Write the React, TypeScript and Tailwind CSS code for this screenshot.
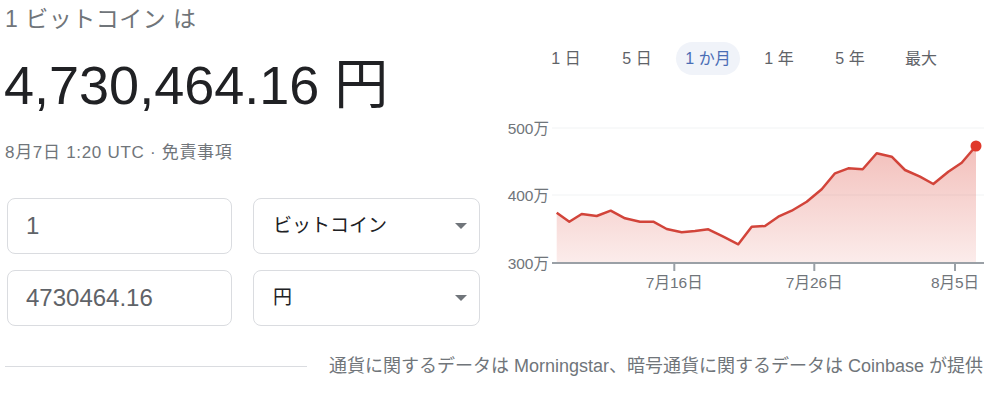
import React from "react";

const FONT = '"Liberation Sans", "Noto Sans CJK JP", sans-serif';

const tabs = ["1 日", "5 日", "1 か月", "1 年", "5 年", "最大"];

const points: [number, number][] = [
  [66.7, 102.7], [79.3, 111.7], [91.7, 104], [106.7, 106], [120.7, 100.7],
  [135, 108.3], [150, 111.7], [163.3, 111.7], [176.7, 119], [191.7, 122.3],
  [205, 121], [218.3, 119.3], [233.3, 126.7], [248.3, 134.3], [261.7, 116.7],
  [275, 116], [288.3, 106.7], [301.7, 100.7], [316.7, 91.7], [331.7, 79.3],
  [345, 63.3], [358.3, 58.3], [372.7, 59.3], [386.7, 43.3], [401.7, 46.7],
  [415, 60], [430, 66.7], [443.3, 74], [458.3, 61.7], [471.7, 52.7], [486, 36],
];

function Chart() {
  const line = points.map(([x, y], i) => `${i ? "L" : "M"}${x} ${y}`).join(" ");
  const area = `${line} L486 153 L66.7 153 Z`;
  const last = points[points.length - 1];
  return (
    <svg width="500" height="190" viewBox="0 0 500 190" style={{ fontFamily: FONT }}>
      <defs>
        <linearGradient id="fill" x1="0" y1="36" x2="0" y2="153" gradientUnits="userSpaceOnUse">
          <stop offset="0" stopColor="#db4437" stopOpacity="0.34" />
          <stop offset="1" stopColor="#db4437" stopOpacity="0.1" />
        </linearGradient>
      </defs>
      <line x1="62" y1="18" x2="494" y2="18" stroke="#f1f3f4" strokeWidth="1" />
      <line x1="62" y1="85" x2="494" y2="85" stroke="#f1f3f4" strokeWidth="1" />
      <path d={area} fill="url(#fill)" />
      <path d={line} fill="none" stroke="#d2443a" strokeWidth="2.5" strokeLinejoin="round" />
      <circle cx={last[0]} cy={last[1]} r="5.5" fill="#e0392b" />
      <line x1="62" y1="153" x2="494" y2="153" stroke="#9aa0a6" strokeWidth="2" />
      {[184.3, 324.3, 465].map((x) => (
        <line key={x} x1={x} y1="153" x2={x} y2="161" stroke="#9aa0a6" strokeWidth="2" />
      ))}
      {[
        ["500万", 18],
        ["400万", 85],
        ["300万", 153],
      ].map(([t, y]) => (
        <text key={t} x="59" y={Number(y) + 5.5} textAnchor="end" fontSize="15.5" fill="#70757a">
          {t}
        </text>
      ))}
      {[
        ["7月16日", 184.3],
        ["7月26日", 324.3],
        ["8月5日", 465],
      ].map(([t, x]) => (
        <text key={t} x={x} y="178" textAnchor="middle" fontSize="15.5" fill="#70757a">
          {t}
        </text>
      ))}
    </svg>
  );
}

function Caret() {
  return (
    <svg width="12" height="6" viewBox="0 0 12 6">
      <path d="M0 0 L12 0 L6 6 Z" fill="#70757a" />
    </svg>
  );
}

export default function App() {
  return (
    <div className="w-[990px] h-[415px] bg-white overflow-hidden flex flex-col" style={{ fontFamily: FONT }}>
      <div className="flex">
        {/* left: rate + converter */}
        <div className="w-[490px] flex flex-col">
          <div className="mt-[4px] pl-[5px] text-[23px] leading-[30px] tracking-[0.5px] text-[#70757a]">
            1 ビットコイン は
          </div>
          <div className="mt-[24px] pl-[4px] text-[54px] leading-[54px] text-[#202124]">
            4,730,464.16 円
          </div>
          <div className="mt-[31px] pl-[5px] text-[17px] leading-[20px] tracking-[0.7px] text-[#70757a]">
            8月7日 1:20 UTC · 免責事項
          </div>
          <div className="mt-[35px] ml-[7px] grid grid-cols-[225px_227px] gap-x-[21px] gap-y-[16px]">
            <div className="h-[56px] rounded-lg border border-[#dadce0] flex items-center px-[18px] text-[24px] text-[#5f6368]">
              1
            </div>
            <div className="h-[56px] rounded-lg border border-[#dadce0] flex items-center justify-between pl-[19px] pr-[12px] text-[19px] text-[#202124]">
              <span>ビットコイン</span>
              <Caret />
            </div>
            <div className="h-[56px] rounded-lg border border-[#dadce0] flex items-center px-[18px] text-[24px] text-[#5f6368]">
              4730464.16
            </div>
            <div className="h-[56px] rounded-lg border border-[#dadce0] flex items-center justify-between pl-[19px] pr-[12px] text-[19px] text-[#202124]">
              <span>円</span>
              <Caret />
            </div>
          </div>
        </div>

        {/* right: range tabs + chart */}
        <div className="flex-1 flex flex-col">
          <div className="mt-[42px] pl-[44px] flex gap-[7px]">
            {tabs.map((t) => (
              <div
                key={t}
                className={
                  t === "1 か月"
                    ? "w-[64px] h-[33px] rounded-full bg-[#f0f3f9] text-[#4a6db5] flex items-center justify-center text-[16px]"
                    : "w-[64px] h-[33px] rounded-full text-[#5f6368] flex items-center justify-center text-[16px]"
                }
              >
                {t}
              </div>
            ))}
          </div>
          <div className="mt-[35px]">
            <Chart />
          </div>
        </div>
      </div>

      {/* attribution */}
      <div className="mt-[28px] flex items-center">
        <div className="ml-[5px] w-[302px] h-px bg-[#dadce0]" />
        <div className="flex-1 text-right pr-[7px] text-[18px] leading-[24px] text-[#70757a]">
          通貨に関するデータは Morningstar、暗号通貨に関するデータは Coinbase が提供
        </div>
      </div>
    </div>
  );
}
